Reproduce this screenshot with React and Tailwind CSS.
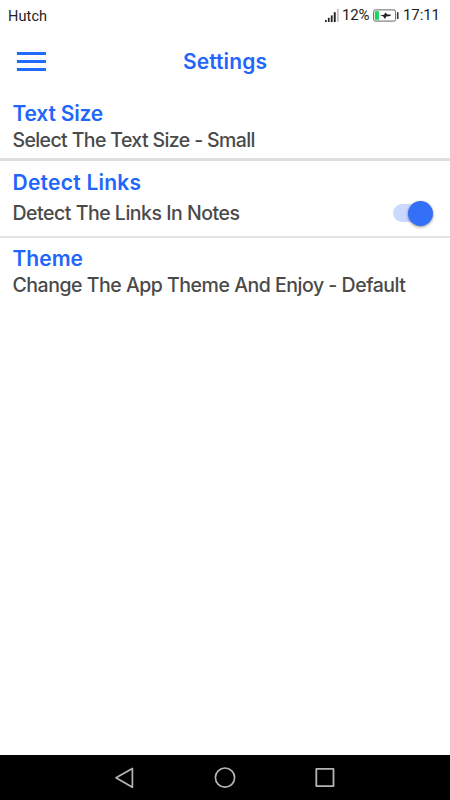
const SignalIcon = () => (
  <svg className="w-[14px] h-[14px]" viewBox="0 0 14 14" fill="#222">
    <rect x="0" y="12" width="1.7" height="2" />
    <rect x="2.9" y="9.8" width="1.7" height="4.2" />
    <rect x="5.8" y="7.4" width="1.8" height="6.6" />
    <rect x="8.8" y="4.2" width="1.9" height="9.8" />
    <rect x="11.9" y="0.8" width="1.9" height="13.2" fill="#c4c4c4" />
  </svg>
);

const BatteryIcon = () => (
  <svg className="w-[26px] h-[13px]" viewBox="0 0 26 13" fill="none">
    <rect x="0.6" y="0.9" width="22" height="11.2" rx="1.6" stroke="#666" strokeWidth="1" />
    <rect x="1.9" y="2.2" width="4" height="8.6" fill="#16d55c" />
    <path d="M7 6.3l4.2-.5 1-2.4 2.4 2.2h3v1.5l-4.4.5-1.2 2.3-2-2.6z" fill="#222" />
    <rect x="24" y="3.2" width="1.5" height="6.8" fill="#333" />
  </svg>
);

function StatusBar() {
  return (
    <div className="flex h-8 items-center justify-between pl-2 pr-[10px] font-['Roboto',sans-serif] text-[15px] text-[#222]">
      <span className="mt-px text-[14.5px] tracking-[0.1px]">Hutch</span>
      <div className="mb-[2px] flex items-center">
        <SignalIcon />
        <span className="ml-[3px] w-[28px] whitespace-nowrap tracking-[-0.2px]">12%</span>
        <span className="ml-[3px]">
          <BatteryIcon />
        </span>
        <span className="ml-[4px] w-[37px] whitespace-nowrap tracking-[-0.1px]">17:11</span>
      </div>
    </div>
  );
}

function Header() {
  return (
    <header className="relative flex h-[62px] items-center justify-center">
      <button className="absolute left-[17px] top-5 flex w-[29px] flex-col gap-[5px]" aria-label="Menu">
        <span className="h-[3px] w-full bg-[#1f6aff]" />
        <span className="h-[3px] w-full bg-[#1f6aff]" />
        <span className="h-[3px] w-full bg-[#1f6aff]" />
      </button>
      <h1 className="mb-[3px] text-[21px] font-semibold tracking-[0.1px] text-[#1f66fa]">Settings</h1>
    </header>
  );
}

function Title({ children, className = "" }) {
  return <h2 className={`text-[21px] leading-[26px] font-semibold text-[#1f66fa] ${className}`}>{children}</h2>;
}

function Description({ children, className = "" }) {
  return (
    <p className={`whitespace-nowrap text-[19.5px] leading-[27px] font-medium text-[#4a4a4a] ${className}`}>
      {children}
    </p>
  );
}

function Toggle() {
  return (
    <button role="switch" aria-checked="true" aria-label="Detect links" className="mb-px flex h-[26px] w-[40px] items-center">
      <span className="h-[18px] w-[32px] rounded-full bg-[#c9d9ff]" />
      <span className="-ml-[17px] size-[25px] shrink-0 rounded-full bg-[#3470f7] shadow-[0_1px_3px_rgba(0,0,0,0.45)]" />
    </button>
  );
}

function NavBar() {
  return (
    <nav className="flex h-[45px] items-center justify-center gap-[76px] bg-black">
      <svg className="size-6" viewBox="0 0 24 24" fill="none" stroke="#b4b4b4" strokeWidth="1.7" strokeLinejoin="round">
        <path d="M19.4 2.4v18.8L3 11.8z" />
      </svg>
      <svg className="size-6" viewBox="0 0 24 24" fill="none" stroke="#b4b4b4" strokeWidth="1.7">
        <circle cx="12" cy="11.6" r="9.6" />
      </svg>
      <svg className="size-6" viewBox="0 0 24 24" fill="none" stroke="#b4b4b4" strokeWidth="1.8" strokeLinejoin="round">
        <rect x="3.3" y="2.9" width="17.2" height="17.2" />
      </svg>
    </nav>
  );
}

export default function App() {
  return (
    <div className="flex h-screen w-full flex-col overflow-hidden bg-white font-['Inter',sans-serif]">
      <StatusBar />
      <Header />
      <main className="flex-1">
        <section className="h-[67px] border-b-[3px] border-[#dfdfdf] px-[12.5px] pt-[7px]">
          <Title className="tracking-[-0.2px]">Text Size</Title>
          <Description className="tracking-[-0.62px]">Select The Text Size - Small</Description>
        </section>
        <section className="h-[77px] border-b-2 border-[#e4e4e4] px-[12.5px] pt-[9px]">
          <Title className="tracking-[0.25px]">Detect Links</Title>
          <div className="mt-[4px] flex items-center justify-between pr-[4.5px]">
            <Description className="tracking-[-0.48px]">Detect The Links In Notes</Description>
            <Toggle />
          </div>
        </section>
        <section className="px-[12.5px] pt-[8px]">
          <Title>Theme</Title>
          <Description className="tracking-[-0.48px]">Change The App Theme And Enjoy - Default</Description>
        </section>
      </main>
      <NavBar />
    </div>
  );
}
